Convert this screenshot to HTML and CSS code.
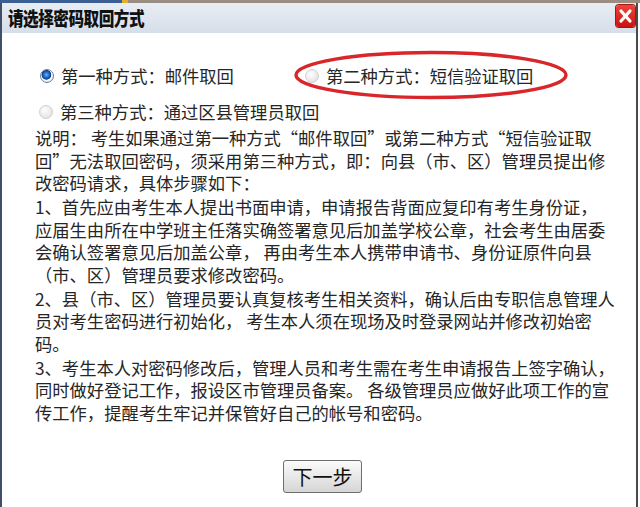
FILE: index.html
```html
<!DOCTYPE html>
<html lang="zh-CN">
<head>
<meta charset="utf-8">
<link rel="stylesheet" href="styles.css">
</head>
<body>
<div class="topstrip"><span class="strip-blue"></span><span class="strip-dot"></span><span class="strip-rest"></span></div>
<div class="window">
  <div class="titlebar">
    <div class="title">请选择密码取回方式</div>
    <div class="close">
      <svg width="19" height="22" viewBox="0 0 19 22"><path d="M5 6 L14 16 M14 6 L5 16" stroke="#fff" stroke-width="3.2" stroke-linecap="round"/></svg>
    </div>
  </div>
  <div class="content">
    <div class="options">
      <div class="option opt1"><span class="radio checked"></span><span>第一种方式：邮件取回</span></div>
      <div class="option opt2"><span class="radio"></span><span>第二种方式：短信验证取回</span>
        <svg class="mark" width="276" height="50" viewBox="0 0 276 50"><ellipse cx="138" cy="25" rx="135" ry="22.5" fill="none" stroke="#d8262b" stroke-width="3.4"/></svg>
      </div>
    </div>
    <div class="option opt3"><span class="radio"></span><span>第三种方式：通过区县管理员取回</span></div>
    <div class="text">
      <p>说明： 考生如果通过第一种方式“邮件取回”或第二种方式“短信验证取<br>回”无法取回密码，须采用第三种方式，即：向县（市、区）管理员提出修<br>改密码请求，具体步骤如下：</p>
      <p>1、首先应由考生本人提出书面申请，申请报告背面应复印有考生身份证，<br>应届生由所在中学班主任落实确签署意见后加盖学校公章，社会考生由居委<br>会确认签署意见后加盖公章， 再由考生本人携带申请书、身份证原件向县<br>（市、区）管理员要求修改密码。</p>
      <p>2、县（市、区）管理员要认真复核考生相关资料，确认后由专职信息管理人<br>员对考生密码进行初始化， 考生本人须在现场及时登录网站并修改初始密<br>码。</p>
      <p>3、考生本人对密码修改后，管理人员和考生需在考生申请报告上签字确认，<br>同时做好登记工作，报设区市管理员备案。 各级管理员应做好此项工作的宣<br>传工作，提醒考生牢记并保管好自己的帐号和密码。</p>
    </div>
    <div class="actions"><button class="next">下一步</button></div>
  </div>
</div>
</body>
</html>
```
FILE: styles.css
```css
html, body {
  margin: 0;
  padding: 0;
  width: 640px;
  height: 507px;
  overflow: hidden;
  background: #ffffff;
  font-family: "Noto Sans CJK SC", "Noto Sans", sans-serif;
}
.topstrip {
  display: flex;
  height: 3px;
}
.strip-blue { width: 122px; background: #3b5f93; }
.strip-dot { width: 6px; background: #e0b030; }
.strip-rest { flex: 1; background: #9a8e84; }
.window {
  height: 504px;
  border-left: 2px solid #3e4f66;
  border-right: 2px solid #4a4a4a;
  margin-right: 2px;
  background: #ffffff;
  display: flex;
  flex-direction: column;
}
.titlebar {
  height: 30px;
  background: linear-gradient(#e8edf4, #d6dee9);
  display: flex;
  align-items: center;
  justify-content: space-between;
  padding-left: 6px;
}
.title {
  font-weight: 900;
  font-size: 19.5px;
  letter-spacing: -0.6px;
  color: #111;
  line-height: 30px;
  transform: scaleX(0.8);
  transform-origin: left center;
}
.close {
  width: 19px;
  height: 22px;
  margin-right: 1px;
  margin-top: -4px;
  border-radius: 3px;
  background: linear-gradient(#f0443c, #c8130f);
  box-shadow: 0 0 0 1px #a31612;
}
.close svg { display: block; }
.content {
  flex: 1;
  display: flex;
  flex-direction: column;
  padding-left: 33px;
  color: #262626;
  font-size: 17.3px;
}
.options {
  display: flex;
  margin-top: 32px;
}
.option {
  display: flex;
  align-items: center;
  height: 22px;
  line-height: 22px;
  white-space: nowrap;
}
.opt1 { margin-left: 5px; width: 265px; }
.opt2 { position: relative; }
.opt3 { margin-left: 4px; margin-top: 14px; }
.mark {
  position: absolute;
  left: -12px;
  top: -15px;
}
.radio {
  width: 14px;
  height: 14px;
  border-radius: 50%;
  margin-right: 7px;
  box-sizing: border-box;
  background: radial-gradient(circle at 40% 35%, #ffffff, #dadada);
  border: 1px solid #d0d0d0;
  flex: none;
}
.radio.checked {
  border: 1px solid #6c7f96;
  background: radial-gradient(circle at 45% 40%, #6fb0ff 0, #1f63c0 3px, #0c3f86 4.5px, #ffffff 5.2px, #e6e9ee 7px);
}
.text {
  margin-top: 4px;
  line-height: 22.6px;
  white-space: nowrap;
}
.text p {
  margin: 0 0 1.2px 0;
}
.actions {
  display: flex;
  margin-top: 35px;
  padding-left: 248px;
}
.next {
  width: 79px;
  height: 33px;
  border: 1px solid #6e6e6e;
  border-radius: 3px;
  background: linear-gradient(#fbfbfb, #e8e8e8 50%, #d6d6d6);
  font-family: "Noto Sans CJK SC", sans-serif;
  font-size: 20px;
  color: #111;
  padding: 0;
  line-height: 31px;
}
```
